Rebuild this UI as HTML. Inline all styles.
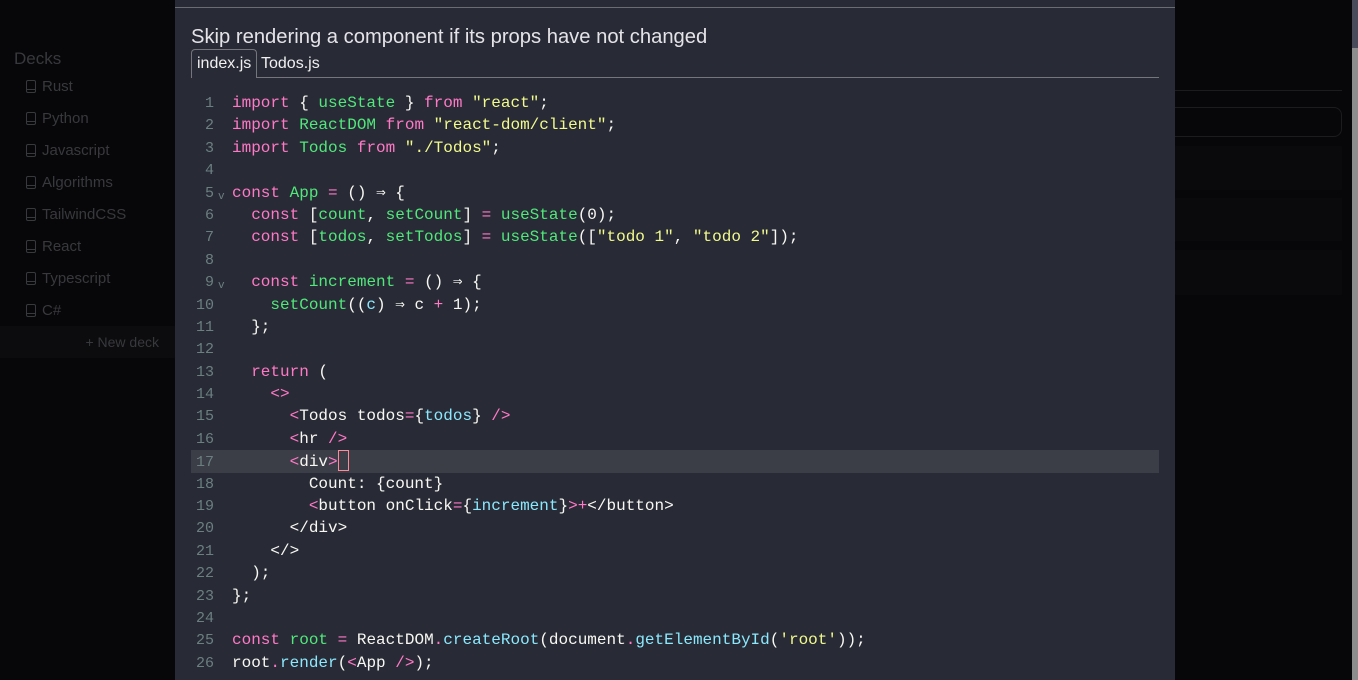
<!DOCTYPE html>
<html><head><meta charset="utf-8"><style>
*{margin:0;padding:0;box-sizing:border-box}
body{width:1358px;height:680px;overflow:hidden;background:#070709;font-family:"Liberation Sans",sans-serif;position:relative}
.side{position:absolute;left:0;top:0;width:175px;height:680px;color:#38393d}
.decks{position:absolute;left:14px;top:49px;font-size:17px}
.item{position:absolute;left:26px;font-size:15px;height:20px;line-height:20px}
.item i{display:inline-block;width:10px;height:13px;border:1.5px solid #38393d;border-radius:2px;margin-right:6px;vertical-align:-2px;position:relative}
.item i:after{content:"";position:absolute;left:0;right:0;bottom:2px;border-top:1.5px solid #38393d}
.newdeck{position:absolute;left:0;top:326px;width:175px;height:32px;background:#0c0c0e;font-size:14px;line-height:32px;text-align:right;padding-right:16px;color:#38393d}
.right{position:absolute;left:1175px;top:0;width:177px;height:680px}
.scroll{position:absolute;left:1352px;top:0;width:6px;height:680px;background:#8d8d8d}
.scroll:before{content:"";position:absolute;left:0;top:0;width:6px;height:48px;background:#4a4b5a}
.modal{position:absolute;left:175px;top:0;width:1000px;height:680px;background:#282a36}
.topline{position:absolute;left:0;top:7px;width:1000px;height:1px;background:#6b6c73}
.title{position:absolute;left:16px;top:26px;font-size:20.2px;color:#e4e4e8}
.tabs{position:absolute;left:16px;top:49px;width:968px;height:29px;border-bottom:1px solid #75767c}
.tab{position:absolute;top:1px;height:28px;font-size:16px;line-height:28px;color:#f0f0f0;padding:0 5px}
.tab.a{left:0;top:0;height:29px;border:1px solid #75767c;border-bottom:none;border-radius:4px 4px 0 0;background:#282a36}
.code{position:absolute;left:16px;top:92px;width:968px;font-family:"Liberation Mono",monospace;font-size:16px;line-height:22.4px;color:#f8f8f2}
.l{height:22.4px;white-space:pre;position:relative}
.l.act{background:#3b3d47}
.n{display:inline-block;text-align:right;padding-right:18px;color:#6b7f80;font-size:15px;width:41px}
.k{color:#ff79c6}.g{color:#50e87a}.y{color:#f1fa8c}.c{color:#8be9fd}
.f{position:absolute;left:27px;top:4px;font-size:11px;color:#6b7f80}
.cur{display:inline-block;width:11px;height:21px;border:1px solid #ff8a9a;vertical-align:-5px}
</style></head><body>
<div class="side">
<div class="decks">Decks</div>
<div class="item" style="top:77px"><i></i>Rust</div>
<div class="item" style="top:109px"><i></i>Python</div>
<div class="item" style="top:141px"><i></i>Javascript</div>
<div class="item" style="top:173px"><i></i>Algorithms</div>
<div class="item" style="top:205px"><i></i>TailwindCSS</div>
<div class="item" style="top:237px"><i></i>React</div>
<div class="item" style="top:269px"><i></i>Typescript</div>
<div class="item" style="top:301px"><i></i>C#</div>
<div class="newdeck">+ New deck</div>
</div>
<div class="right">
<div style="position:absolute;left:0;top:90px;width:167px;height:1px;background:#1c1c1f"></div>
<div style="position:absolute;left:-10px;top:107px;width:177px;height:30px;border:1px solid #1c1c1f;border-radius:8px"></div>
<div style="position:absolute;left:0;top:146px;width:167px;height:44px;background:#0a0a0c"></div>
<div style="position:absolute;left:0;top:198px;width:167px;height:43px;background:#0a0a0c"></div>
<div style="position:absolute;left:0;top:250px;width:167px;height:45px;background:#0a0a0c"></div>
</div>
<div class="scroll"></div>
<div class="modal">
<div class="topline"></div>
<div class="title">Skip rendering a component if its props have not changed</div>
<div class="tabs"><div class="tab a">index.js</div><div class="tab" style="left:65px">Todos.js</div></div>
<div class="code">
<div class="l"><span class="n">1</span><span class="k">import</span> { <span class="g">useState</span> } <span class="k">from</span> <span class="y">"react"</span>;</div>
<div class="l"><span class="n">2</span><span class="k">import</span> <span class="g">ReactDOM</span> <span class="k">from</span> <span class="y">"react-dom/client"</span>;</div>
<div class="l"><span class="n">3</span><span class="k">import</span> <span class="g">Todos</span> <span class="k">from</span> <span class="y">"./Todos"</span>;</div>
<div class="l"><span class="n">4</span></div>
<div class="l"><span class="n">5</span><span class="f">v</span><span class="k">const</span> <span class="g">App</span> <span class="k">=</span> () ⇒ {</div>
<div class="l"><span class="n">6</span>  <span class="k">const</span> [<span class="g">count</span>, <span class="g">setCount</span>] <span class="k">=</span> <span class="g">useState</span>(0);</div>
<div class="l"><span class="n">7</span>  <span class="k">const</span> [<span class="g">todos</span>, <span class="g">setTodos</span>] <span class="k">=</span> <span class="g">useState</span>([<span class="y">"todo 1"</span>, <span class="y">"todo 2"</span>]);</div>
<div class="l"><span class="n">8</span></div>
<div class="l"><span class="n">9</span><span class="f">v</span>  <span class="k">const</span> <span class="g">increment</span> <span class="k">=</span> () ⇒ {</div>
<div class="l"><span class="n">10</span>    <span class="g">setCount</span>((<span class="c">c</span>) ⇒ c <span class="k">+</span> 1);</div>
<div class="l"><span class="n">11</span>  };</div>
<div class="l"><span class="n">12</span></div>
<div class="l"><span class="n">13</span>  <span class="k">return</span> (</div>
<div class="l"><span class="n">14</span>    <span class="k">&lt;&gt;</span></div>
<div class="l"><span class="n">15</span>      <span class="k">&lt;</span>Todos todos<span class="k">=</span>{<span class="c">todos</span>} <span class="k">/&gt;</span></div>
<div class="l"><span class="n">16</span>      <span class="k">&lt;</span>hr <span class="k">/&gt;</span></div>
<div class="l act"><span class="n">17</span>      <span class="k">&lt;</span>div<span class="k">&gt;</span><span class="cur"></span></div>
<div class="l"><span class="n">18</span>        Count: {count}</div>
<div class="l"><span class="n">19</span>        <span class="k">&lt;</span>button onClick<span class="k">=</span>{<span class="c">increment</span>}<span class="k">&gt;+</span>&lt;/button&gt;</div>
<div class="l"><span class="n">20</span>      &lt;/div&gt;</div>
<div class="l"><span class="n">21</span>    &lt;/&gt;</div>
<div class="l"><span class="n">22</span>  );</div>
<div class="l"><span class="n">23</span>};</div>
<div class="l"><span class="n">24</span></div>
<div class="l"><span class="n">25</span><span class="k">const</span> <span class="g">root</span> <span class="k">=</span> ReactDOM<span class="k">.</span><span class="c">createRoot</span>(document<span class="k">.</span><span class="c">getElementById</span>(<span class="y">'root'</span>));</div>
<div class="l"><span class="n">26</span>root<span class="k">.</span><span class="c">render</span>(<span class="k">&lt;</span>App <span class="k">/&gt;</span>);</div>
</div>
</div>
</body></html>
